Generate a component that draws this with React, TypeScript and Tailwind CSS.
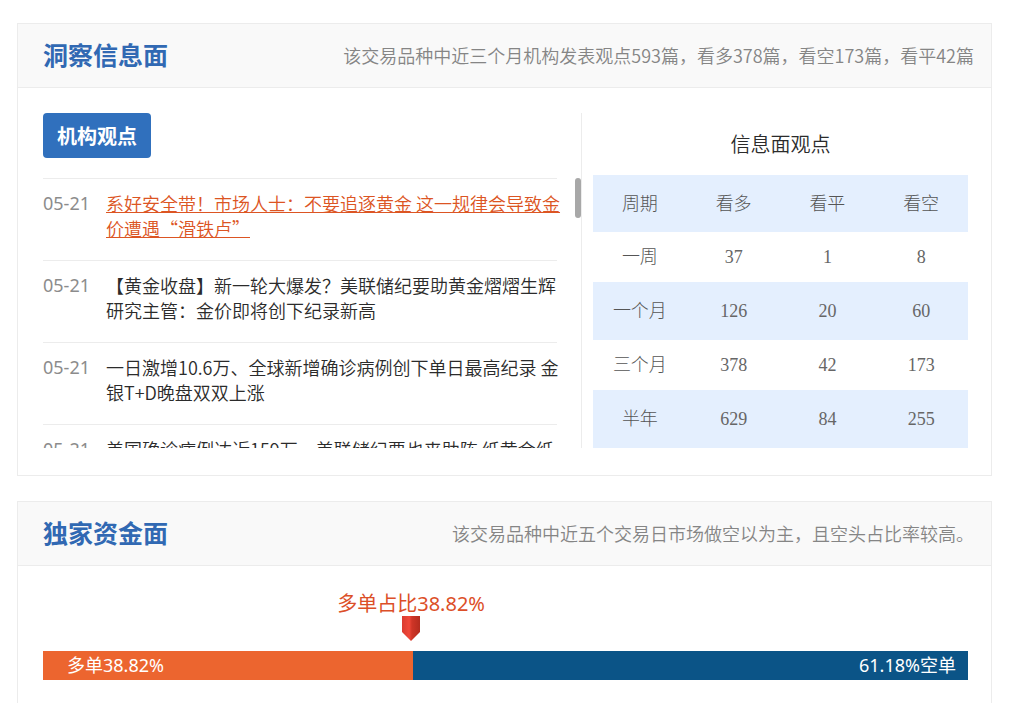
import type { ReactNode } from 'react'

type NewsItem = {
  id: number
  date: string
  title: string
  active?: boolean
}

type ViewRow = {
  period: string
  long: number
  flat: number
  short: number
}

const NEWS: NewsItem[] = [
  {
    id: 1,
    date: '05-21',
    title: '系好安全带！市场人士：不要追逐黄金 这一规律会导致金价遭遇“滑铁卢”',
    active: true,
  },
  {
    id: 2,
    date: '05-21',
    title: '【黄金收盘】新一轮大爆发？美联储纪要助黄金熠熠生辉 研究主管：金价即将创下纪录新高',
  },
  {
    id: 3,
    date: '05-21',
    title: '一日激增10.6万、全球新增确诊病例创下单日最高纪录 金银T+D晚盘双双上涨',
  },
  {
    id: 4,
    date: '05-21',
    title: '美国确诊病例达近159万，美联储纪要也来助阵 纸黄金纸白银上涨',
  },
]

const COLUMNS = ['周期', '看多', '看平', '看空']

const VIEWS: ViewRow[] = [
  { period: '一周', long: 37, flat: 1, short: 8 },
  { period: '一个月', long: 126, flat: 20, short: 60 },
  { period: '三个月', long: 378, flat: 42, short: 173 },
  { period: '半年', long: 629, flat: 84, short: 255 },
]

const LONG_RATIO = 38.82
const SHORT_RATIO = 61.18

type PanelHeaderProps = {
  title: string
  children: ReactNode
}

function PanelHeader({ title, children }: PanelHeaderProps) {
  return (
    <header className="flex h-16 items-center justify-between border-b border-[#ececec] bg-[#f9f9f9] pr-[17px] pb-0.5 pl-[25px]">
      <h2 className="text-[25px] font-bold text-[#3169b3]">{title}</h2>
      <p className="text-lg font-[350] whitespace-nowrap text-[#858585]">{children}</p>
    </header>
  )
}

function NewsList() {
  return (
    <div className="relative h-[270px] overflow-hidden pr-6">
      <ul>
        {NEWS.map((item) => (
          <li
            key={item.id}
            className="flex gap-4 border-t border-[#ececec] pt-3 pb-[19px] text-lg leading-[25px] font-[350]"
          >
            <time className="w-[47px] shrink-0 font-['Noto_Sans',sans-serif] font-normal whitespace-nowrap text-[#8c8c8c]">
              {item.date}
            </time>
            <a
              href="#"
              className={`-mr-2 flex-1 ${
                item.active ? 'text-[#dc5523] underline' : 'text-[#2b2b2b]'
              }`}
            >
              {item.title}
            </a>
          </li>
        ))}
      </ul>

      {/* Scroll thumb */}
      <div className="absolute top-0 right-0 h-10 w-1.5 rounded-full bg-[#a8a8a8]"></div>
    </div>
  )
}

function ViewTable() {
  return (
    <table className="w-full table-fixed text-center font-['Liberation_Serif','Noto_Sans_CJK_SC',serif] text-lg font-light text-[#555]">
      <caption className="h-[62px] font-['Noto_Sans_CJK_SC',sans-serif] text-xl leading-[62px] font-[350] text-[#2b2b2b]">
        信息面观点
      </caption>
      <thead>
        <tr className="h-[57px] bg-[#e4effe]">
          {COLUMNS.map((column) => (
            <th key={column} scope="col" className="font-light">
              {column}
            </th>
          ))}
        </tr>
      </thead>
      <tbody>
        {VIEWS.map((row) => (
          <tr key={row.period} className="h-[50px] even:h-[58px] even:bg-[#e4effe]">
            <th scope="row" className="font-light">
              {row.period}
            </th>
            <td className="text-[#666]">{row.long}</td>
            <td className="text-[#666]">{row.flat}</td>
            <td className="text-[#666]">{row.short}</td>
          </tr>
        ))}
      </tbody>
    </table>
  )
}

function RatioBar() {
  return (
    <div className="font-['Noto_Sans','Noto_Sans_CJK_SC',sans-serif]">
      <div className="relative h-[59px]">
        {/* Marker sits on the long share */}
        <div
          className="absolute top-0 flex w-[18px] flex-col items-center"
          style={{ left: `${LONG_RATIO}%` }}
        >
          <span className="text-xl leading-6 whitespace-nowrap text-[#dc4f28]">
            多单占比{LONG_RATIO}%
          </span>
          <svg width="18" height="25" viewBox="0 0 18 25" aria-hidden="true">
            <defs>
              <linearGradient id="marker" x1="0" x2="1" y1="0" y2="0">
                <stop offset="0" stopColor="#da3b30" />
                <stop offset="0.4" stopColor="#f0483a" />
                <stop offset="0.55" stopColor="#cf3527" />
                <stop offset="1" stopColor="#b32b1e" />
              </linearGradient>
            </defs>
            <path d="M0 0h18v16l-9 9-9-9z" fill="url(#marker)" />
          </svg>
        </div>
      </div>
      <div className="flex h-[29px] items-center bg-[#0b5487] text-lg leading-[29px] text-white">
        <div className="w-2/5 bg-[#ec652f] pl-6">多单{LONG_RATIO}%</div>
        <div className="flex-1 pr-3 text-right">{SHORT_RATIO}%空单</div>
      </div>
    </div>
  )
}

export default function App() {
  return (
    <main
      lang="zh-CN"
      className="space-y-[25px] bg-white pt-[23px] pr-[25px] pl-[17px] font-['Noto_Sans_CJK_SC',sans-serif]"
    >
      <section className="border border-[#ececec]">
        <PanelHeader title="洞察信息面">
          该交易品种中近三个月机构发表观点593篇，看多378篇，看空173篇，看平42篇
        </PanelHeader>
        <div className="grid grid-cols-[539fr_386fr] pt-[25px] pr-[23px] pb-[27px] pl-[25px]">
          <div className="border-r border-[#ececec]">
            <button
              type="button"
              className="mb-5 block h-[45px] rounded bg-[#3070bd] px-3.5 text-xl font-bold text-white"
            >
              机构观点
            </button>
            <NewsList />
          </div>
          <div className="pl-[11px]">
            <ViewTable />
          </div>
        </div>
      </section>

      <section className="border border-b-0 border-[#ececec]">
        <PanelHeader title="独家资金面">
          该交易品种中近五个交易日市场做空以为主，且空头占比率较高。
        </PanelHeader>
        <div className="pt-[26px] pr-[23px] pb-[23px] pl-[25px]">
          <RatioBar />
        </div>
      </section>
    </main>
  )
}
